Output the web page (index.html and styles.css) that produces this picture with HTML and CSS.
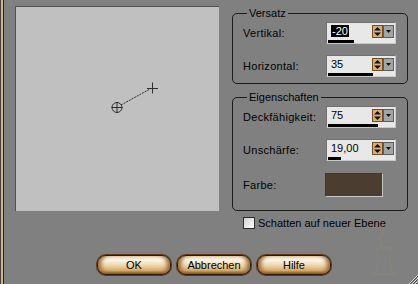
FILE: index.html
```html
<!DOCTYPE html>
<html lang="de">
<head>
    <meta charset="UTF-8">
    <title>Schlagschatten</title>
    <link rel="stylesheet" href="styles.css">
</head>
<body>
    <div class="window">
        <div class="edge"></div>
        <div class="dialog">
            <div class="upper">
                <div class="preview">
                    <svg width="203" height="204" viewBox="0 0 203 204">
                        <line x1="105" y1="98" x2="134" y2="82" stroke="#2e2e2e" stroke-width="1" stroke-dasharray="2 1"/>
                        <circle cx="101" cy="100.5" r="5" fill="none" stroke="#2e2e2e" stroke-width="1"/>
                        <line x1="101" y1="95" x2="101" y2="106" stroke="#2e2e2e"/>
                        <line x1="95.5" y1="100.5" x2="106.5" y2="100.5" stroke="#2e2e2e"/>
                        <line x1="136.5" y1="75.5" x2="136.5" y2="86.5" stroke="#2e2e2e"/>
                        <line x1="131" y1="81.5" x2="142" y2="81.5" stroke="#2e2e2e"/>
                    </svg>
                </div>
                <div class="settings">
                    <fieldset class="group group-offset">
                        <legend>Versatz</legend>
                        <div class="row">
                            <span class="label">Vertikal:</span>
                            <div class="spin">
                                <div class="spin-main">
                                    <span class="spin-value"><span class="selected">-20</span></span>
                                    <span class="spin-arrows"><svg width="9" height="11" viewBox="0 0 9 11"><path d="M4.5 1 L8 4.5 L1 4.5 Z M1 6.5 L8 6.5 L4.5 10 Z" fill="#111"/></svg></span>
                                    <span class="spin-drop"><svg width="9" height="11" viewBox="0 0 9 11"><path d="M2 4 L7 4 L4.5 7 Z" fill="#111"/></svg></span>
                                </div>
                                <div class="spin-bar"><div class="spin-fill" style="width: 40%"></div></div>
                            </div>
                        </div>
                        <div class="row">
                            <span class="label">Horizontal:</span>
                            <div class="spin">
                                <div class="spin-main">
                                    <span class="spin-value">35</span>
                                    <span class="spin-arrows"><svg width="9" height="11" viewBox="0 0 9 11"><path d="M4.5 1 L8 4.5 L1 4.5 Z M1 6.5 L8 6.5 L4.5 10 Z" fill="#111"/></svg></span>
                                    <span class="spin-drop"><svg width="9" height="11" viewBox="0 0 9 11"><path d="M2 4 L7 4 L4.5 7 Z" fill="#111"/></svg></span>
                                </div>
                                <div class="spin-bar"><div class="spin-fill" style="width: 67.5%"></div></div>
                            </div>
                        </div>
                    </fieldset>
                    <fieldset class="group group-props">
                        <legend>Eigenschaften</legend>
                        <div class="row">
                            <span class="label">Deckfähigkeit:</span>
                            <div class="spin">
                                <div class="spin-main">
                                    <span class="spin-value">75</span>
                                    <span class="spin-arrows"><svg width="9" height="11" viewBox="0 0 9 11"><path d="M4.5 1 L8 4.5 L1 4.5 Z M1 6.5 L8 6.5 L4.5 10 Z" fill="#111"/></svg></span>
                                    <span class="spin-drop"><svg width="9" height="11" viewBox="0 0 9 11"><path d="M2 4 L7 4 L4.5 7 Z" fill="#111"/></svg></span>
                                </div>
                                <div class="spin-bar"><div class="spin-fill" style="width: 75%"></div></div>
                            </div>
                        </div>
                        <div class="row">
                            <span class="label">Unschärfe:</span>
                            <div class="spin">
                                <div class="spin-main">
                                    <span class="spin-value">19,00</span>
                                    <span class="spin-arrows"><svg width="9" height="11" viewBox="0 0 9 11"><path d="M4.5 1 L8 4.5 L1 4.5 Z M1 6.5 L8 6.5 L4.5 10 Z" fill="#111"/></svg></span>
                                    <span class="spin-drop"><svg width="9" height="11" viewBox="0 0 9 11"><path d="M2 4 L7 4 L4.5 7 Z" fill="#111"/></svg></span>
                                </div>
                                <div class="spin-bar"><div class="spin-fill" style="width: 19%"></div></div>
                            </div>
                        </div>
                        <div class="row row-color">
                            <span class="label">Farbe:</span>
                            <div class="swatch"></div>
                        </div>
                    </fieldset>
                    <label class="check">
                        <span class="check-box"></span>
                        <span>Schatten auf neuer Ebene</span>
                    </label>
                </div>
            </div>
            <div class="buttons">
                <button class="btn">OK</button>
                <button class="btn">Abbrechen</button>
                <button class="btn">Hilfe</button>
            </div>
        </div>
        <svg class="watermark" width="40" height="60" viewBox="0 0 40 60">
            <path d="M20 4 C14 8 24 12 18 16 C12 20 22 24 16 28 M10 30 L30 30 M14 30 C12 40 16 46 12 54 M26 30 C28 40 24 46 28 54 M8 56 L32 56" fill="none" stroke="#a09070" stroke-width="1.5" opacity="0.25"/>
        </svg>
        <svg class="grip" width="10" height="10" viewBox="0 0 10 10">
            <path d="M10 1 L1 10 M10 4 L4 10 M10 7 L7 10" stroke="#e0e0e0" stroke-width="1"/>
            <path d="M10 2 L2 10 M10 5 L5 10 M10 8 L8 10" stroke="#505050" stroke-width="1"/>
        </svg>
    </div>
</body>
</html>
```

FILE: styles.css
```css
* {
    box-sizing: border-box;
}
body {
    margin: 0;
    background-color: #808080;
    font-family: "Liberation Sans", Arial, sans-serif;
    font-size: 11px;
    color: #000;
}
.window {
    position: relative;
    display: flex;
    width: 418px;
    height: 284px;
    overflow: hidden;
}
.edge {
    width: 4px;
    background: linear-gradient(to right, #4a4038 0 1px, #cdb596 1px 3px, #2a2018 3px 4px);
}
.dialog {
    flex-grow: 1;
    display: flex;
    flex-direction: column;
}
.upper {
    display: flex;
    align-items: flex-start;
    padding-top: 6px;
}
.preview {
    margin-left: 11px;
    width: 204px;
    height: 205px;
    background-color: #c0c0c0;
    border-top: 1px solid #505050;
    border-left: 1px solid #505050;
}
.preview svg {
    display: block;
}
.settings {
    margin-left: 13px;
    margin-top: 1px;
    width: 176px;
    display: flex;
    flex-direction: column;
}
.group {
    margin: 0;
    border: 1px solid #1c1c1c;
    border-radius: 5px;
    display: flex;
    flex-direction: column;
    gap: 11px;
    padding: 3px 11px 6px 10px;
}
.group legend {
    padding: 0 2px;
    margin-left: 4px;
    line-height: 12px;
}
.group-props {
    margin-top: 7px;
    padding-bottom: 13px;
}
.row {
    display: flex;
    align-items: center;
    justify-content: space-between;
}
.label {
    letter-spacing: 0.3px;
}
.row-color {
    margin-top: 1px;
}
.spin {
    width: 70px;
    height: 22px;
    display: flex;
    flex-direction: column;
    background-color: #e8e8e8;
    border: 1px solid #707070;
    border-right-color: #c8c8c8;
    border-bottom-color: #c8c8c8;
}
.spin-main {
    display: flex;
    align-items: center;
    height: 17px;
}
.spin-value {
    flex-grow: 1;
    padding-left: 4px;
    line-height: 13px;
}
.selected {
    background-color: #000;
    color: #fff;
    padding: 0 1px;
}
.spin-arrows {
    width: 11px;
    height: 13px;
    background-color: #d9ae76;
    border: 1px solid #6e4c26;
    display: flex;
}
.spin-drop {
    width: 11px;
    height: 13px;
    background-color: #a4a4a4;
    border: 1px solid #5c5c5c;
    margin-right: 1px;
    display: flex;
}
.spin-bar {
    height: 3px;
    margin: 0 1px;
}
.spin-fill {
    height: 100%;
    background-color: #000;
}
.swatch {
    width: 58px;
    height: 24px;
    margin-right: 13px;
    background-color: #4b3e30;
    border: 1px solid #3a3a3a;
    border-right-color: #c8c8c8;
    border-bottom-color: #c8c8c8;
}
.check {
    display: flex;
    align-items: center;
    gap: 3px;
    margin-top: 6px;
    margin-left: 11px;
    line-height: 12px;
}
.check-box {
    width: 12px;
    height: 12px;
    border: 1px solid #2c2c2c;
    background: linear-gradient(135deg, #d0d0d0, #ffffff);
}
.buttons {
    margin-top: auto;
    padding: 0 0 9px 93px;
    display: flex;
    gap: 6px;
}
.btn {
    width: 74px;
    height: 20px;
    padding: 0;
    font-family: "Liberation Sans", Arial, sans-serif;
    font-size: 11px;
    font-weight: normal;
    color: #000;
    border: 1px solid #2a1a0a;
    border-radius: 9px;
    background: linear-gradient(to bottom, #f4e6cc 0%, #fbf3e4 25%, #ecd2a6 55%, #d6aa6c 80%, #7a5020 100%);
    box-shadow: inset 5px 0 4px -2px #9c6c32, inset -5px 0 4px -2px #9c6c32, 0 0 0 1px #5a3a18;
}
.watermark {
    position: absolute;
    right: 14px;
    bottom: 6px;
}
.grip {
    position: absolute;
    right: 0;
    bottom: 0;
}
```
